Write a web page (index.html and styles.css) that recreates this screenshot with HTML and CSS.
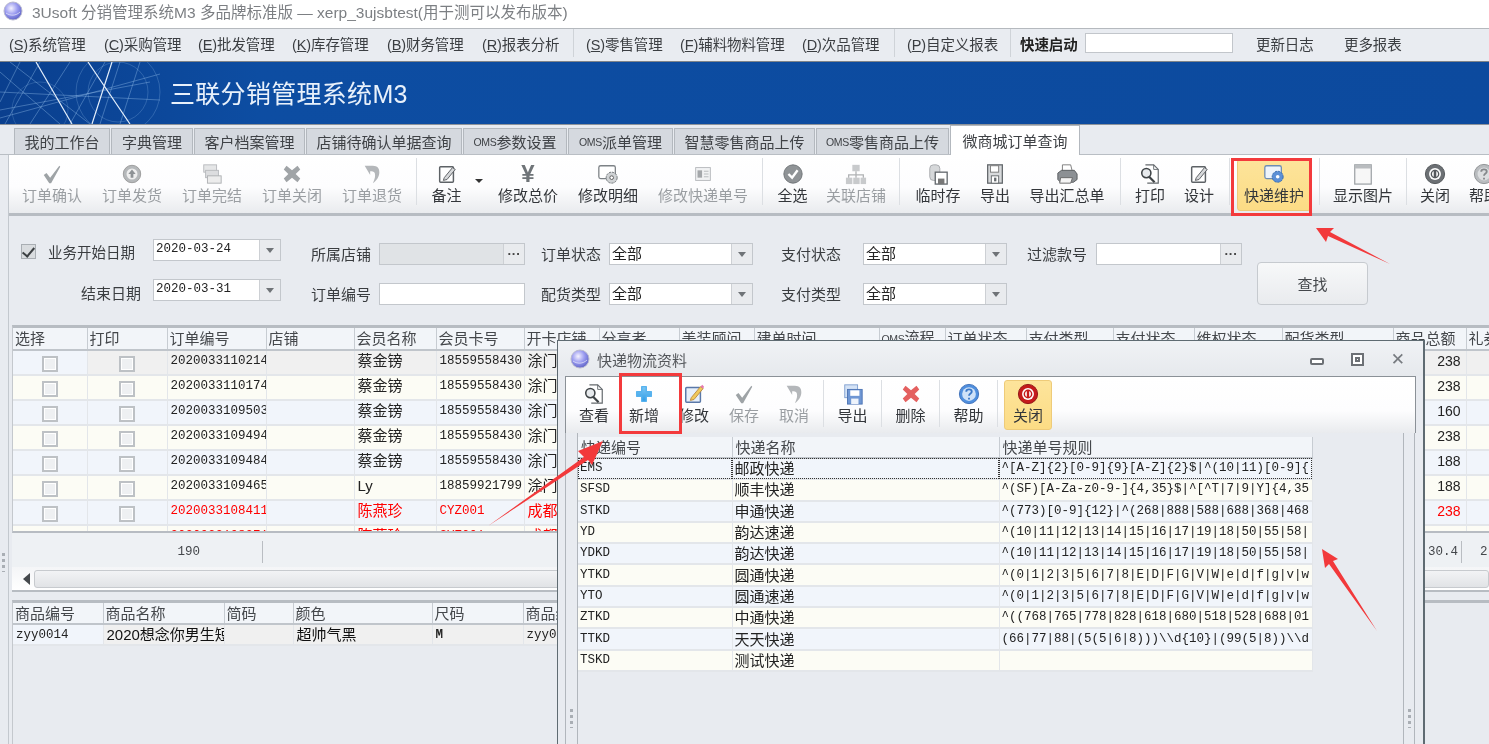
FILE: index.html
```html
<!DOCTYPE html>
<html lang="zh-CN">
<head>
<meta charset="utf-8">
<title>3Usoft 分销管理系统M3</title>
<link rel="stylesheet" href="styles.css">
</head>
<body>
<svg class="defs" width="0" height="0" aria-hidden="true">
  <defs>
    <radialGradient id="orb" cx="40%" cy="35%" r="70%"><stop offset="0" stop-color="#f4f2ff"/><stop offset=".5" stop-color="#9b9cf0"/><stop offset="1" stop-color="#5a5fc4"/></radialGradient>
    <linearGradient id="bluegrad" x1="0" y1="0" x2="0" y2="1"><stop offset="0" stop-color="#7dc8f5"/><stop offset="1" stop-color="#2f9be6"/></linearGradient>
    <symbol id="i-orb" viewBox="0 0 20 20"><circle cx="10" cy="10" r="9" fill="url(#orb)" stroke="#b9b9cf"/><path d="M3 12c4 3 10 3 14-1" fill="none" stroke="#fff" opacity=".6"/></symbol>
    <symbol id="i-check" viewBox="0 0 24 24"><path d="M3 13l3-2 4 5L20 3l1 1-10 18h-2z" fill="#9ea3a6"/></symbol>
    <symbol id="i-up" viewBox="0 0 24 24"><circle cx="12" cy="12" r="9.500" fill="#b5b8ba" stroke="#999"/><circle cx="12" cy="12" r="6" fill="#eee"/><path d="M12 7l4 5h-2.500v4h-3v-4H8z" fill="#8e9295"/></symbol>
    <symbol id="i-stack" viewBox="0 0 24 24"><rect x="3" y="2" width="14" height="8" fill="#e5e6e7" stroke="#b8babd"/><rect x="5" y="8" width="14" height="8" fill="#dcdddf" stroke="#b8babd"/><rect x="7" y="14" width="15" height="8" fill="#ececec" stroke="#adafb2"/></symbol>
    <symbol id="i-x" viewBox="0 0 24 24"><path d="M6 3l6 5 6-5 3 4-5 5 5 5-3 4-6-5-6 5-3-4 5-5-5-5z" fill="#a0a4a7"/></symbol>
    <symbol id="i-undo" viewBox="0 0 24 24"><path d="M4 3h9c5 0 7 3 7 7 0 5-3 9-7 12 2-4 3-8 2-11-1-2-3-2-5-2v4z" fill="#b4b7ba"/></symbol>
    <symbol id="i-edit" viewBox="0 0 24 24"><rect x="4" y="4" width="15" height="17" rx="1" fill="#fff" stroke="#5d6266" stroke-width="1.600"/><path d="M9 16l9-11 3 2-9 11-4 1z" fill="#d6d8da" stroke="#55595d"/></symbol>
    <symbol id="i-edit-c" viewBox="0 0 24 24"><rect x="3" y="5" width="16" height="16" rx="1" fill="#e6effa" stroke="#5a78a8" stroke-width="1.600"/><path d="M9 16l10-12 3 2-10 12-4 1z" fill="#f1c95a" stroke="#b98a40"/><path d="M19 4l3 2 1-2-2-2z" fill="#e779b0"/></symbol>
    <symbol id="i-gear" viewBox="0 0 24 24"><rect x="2" y="3" width="18" height="14" rx="2" fill="#fff" stroke="#7d8286" stroke-width="1.400"/><circle cx="16" cy="16" r="6" fill="#cfd2d4" stroke="#666b6f" stroke-dasharray="2.500 1"/><circle cx="16" cy="16" r="2" fill="#fff" stroke="#555"/></symbol>
    <symbol id="i-gear-b" viewBox="0 0 24 24"><rect x="2" y="3" width="18" height="14" rx="2" fill="#eef4fb" stroke="#6d8db5" stroke-width="1.400"/><circle cx="16" cy="15" r="6" fill="#5c90d6" stroke="#2f66ad" stroke-dasharray="2.500 1"/><circle cx="16" cy="15" r="2" fill="#fff"/></symbol>
    <symbol id="i-card" viewBox="0 0 24 24"><rect x="4" y="5" width="16" height="14" fill="#f1f2f3" stroke="#b5b8bb"/><rect x="6" y="8" width="5" height="8" fill="#a4a7aa"/><path d="M13 9h5M13 12h5M13 15h5" stroke="#b5b8bb"/></symbol>
    <symbol id="i-checkc" viewBox="0 0 24 24"><circle cx="12" cy="12" r="10" fill="#8f9396" stroke="#6f7376"/><path d="M7 12l4 4 6-8" fill="none" stroke="#fff" stroke-width="2.600"/></symbol>
    <symbol id="i-tree" viewBox="0 0 24 24"><rect x="8" y="2" width="8" height="7" fill="#c8cacc"/><rect x="1" y="16" width="7" height="7" fill="#c8cacc"/><rect x="9" y="16" width="7" height="7" fill="#c8cacc"/><rect x="17" y="16" width="6" height="7" fill="#c8cacc"/><path d="M12 9v7M4 16v-3h16v3" fill="none" stroke="#b0b2b4" stroke-width="1.400"/></symbol>
    <symbol id="i-db" viewBox="0 0 24 24"><rect x="3" y="2" width="11" height="17" rx="4" fill="#d6d8da" stroke="#a6a9ac"/><rect x="9" y="10" width="13" height="13" fill="#fff" stroke="#60656a" stroke-width="1.400"/><rect x="12" y="17" width="7" height="6" fill="#777"/></symbol>
    <symbol id="i-save" viewBox="0 0 24 24"><rect x="4" y="2" width="16" height="20" fill="#d8dadc" stroke="#63686c" stroke-width="1.400"/><rect x="7" y="3" width="9" height="7" fill="#fff" stroke="#777"/><rect x="8" y="14" width="8" height="8" fill="#fff" stroke="#63686c"/><rect x="11" y="16" width="2.500" height="4" fill="#63686c"/></symbol>
    <symbol id="i-save-b" viewBox="0 0 24 24"><rect x="3" y="2" width="14" height="14" fill="#d5e3f6" stroke="#7f9fd0"/><rect x="6" y="7" width="16" height="16" fill="#6f97d4" stroke="#4c74b4"/><rect x="9" y="8" width="10" height="6" fill="#fff"/><rect x="10" y="17" width="8" height="6" fill="#eef3fb"/></symbol>
    <symbol id="i-print" viewBox="0 0 24 24"><path d="M7 2h9l2 8H7z" fill="#fff" stroke="#777"/><path d="M2 11l4-3h14l3 4v6l-4 3H5l-3-3z" fill="#8c9094" stroke="#55595c"/><path d="M5 16h13l-2 6H4z" fill="#f4f4f4" stroke="#666"/></symbol>
    <symbol id="i-find" viewBox="0 0 24 24"><path d="M7 2h9l5 5v15H9" fill="#fff" stroke="#64696d" stroke-width="1.300"/><path d="M16 2v5h5" fill="none" stroke="#64696d"/><circle cx="8" cy="11" r="5" fill="#e7eaed" stroke="#3f4447" stroke-width="1.700"/><path d="M11 15l6 6" stroke="#3f4447" stroke-width="2.400"/></symbol>
    <symbol id="i-win" viewBox="0 0 24 24"><rect x="3" y="2" width="18" height="21" fill="#f7f7f7" stroke="#999ea2" stroke-width="1.300"/><rect x="3" y="2" width="18" height="4" fill="#b9bcbf"/></symbol>
    <symbol id="i-power" viewBox="0 0 24 24"><circle cx="12" cy="12" r="10.500" fill="#6c7074" stroke="#4f5357"/><circle cx="12" cy="12" r="6.500" fill="#fff"/><path d="M12 7.500v9" stroke="#55595d" stroke-width="2.800"/><circle cx="12" cy="12" r="4" fill="none" stroke="#55595d" stroke-width="1.500"/></symbol>
    <symbol id="i-help" viewBox="0 0 24 24"><circle cx="12" cy="12" r="10.500" fill="#b9bcbf" stroke="#8c8f92"/><circle cx="12" cy="12" r="7" fill="#dcdee0"/><path d="M9 9.500c0-3.500 6-3.500 6 0 0 2-3 2-3 4.500M12 16v2" fill="none" stroke="#85888b" stroke-width="2"/></symbol>
    <symbol id="i-help-b" viewBox="0 0 24 24"><circle cx="12" cy="12" r="10.500" fill="#4f8fde" stroke="#3c6fb8"/><circle cx="12" cy="12" r="7.500" fill="#cfe2f8"/><path d="M9 9.500c0-3.500 6-3.500 6 0 0 2-3 2-3 4.500M12 16v2" fill="none" stroke="#3a78c8" stroke-width="2"/></symbol>
    <symbol id="i-plus" viewBox="0 0 24 24"><path d="M9.500 4h5v5.500H20v5h-5.500V20h-5v-5.500H4v-5h5.500z" fill="url(#bluegrad)" stroke="#57b2ee" stroke-linejoin="round" stroke-width="1.500"/></symbol>
    <symbol id="i-xred" viewBox="0 0 24 24"><path d="M6 3l6 5 6-5 3 4-5 5 5 5-3 4-6-5-6 5-3-4 5-5-5-5z" fill="#e4605f"/></symbol>
    <symbol id="i-powerred" viewBox="0 0 24 24"><circle cx="12" cy="12" r="10.500" fill="#c51a1c" stroke="#8d1214"/><circle cx="12" cy="12" r="6.500" fill="#fff"/><circle cx="12" cy="12" r="4" fill="none" stroke="#c51a1c" stroke-width="1.600"/><path d="M12 7.500v8" stroke="#c51a1c" stroke-width="2.600"/></symbol>
  </defs>
</svg>

<div class="app">
  <header class="titlebar">
    <svg class="orb"><use href="#i-orb"/></svg>
    <span class="title-text">3Usoft 分销管理系统M3 多品牌标准版 — xerp_3ujsbtest(用于测可以发布版本)</span>
  </header>

  <nav class="menubar">
    <span class="menu w96">(<u>S</u>)系统管理</span>
    <span class="menu w94">(<u>C</u>)采购管理</span>
    <span class="menu w94">(<u>E</u>)批发管理</span>
    <span class="menu w95">(<u>K</u>)库存管理</span>
    <span class="menu w95">(<u>B</u>)财务管理</span>
    <span class="menu w91">(<u>R</u>)报表分析</span>
    <i class="msep"></i>
    <span class="menu w94">(<u>S</u>)零售管理</span>
    <span class="menu w122">(<u>F</u>)辅料物料管理</span>
    <span class="menu w93">(<u>D</u>)次品管理</span>
    <i class="msep"></i>
    <span class="menu w103">(<u>P</u>)自定义报表</span>
    <i class="msep"></i>
    <span class="menu quick">快速启动</span>
    <span class="quick-input"></span>
    <span class="menu plain">更新日志</span>
    <span class="menu plain">更多报表</span>
  </nav>

  <div class="banner">
    <svg class="banner-art" viewBox="0 0 165 62" width="165" height="62">
      <g fill="none" stroke="#9cc4ee" stroke-opacity=".55" stroke-width=".7">
        <path d="M0 10L60 62M10 0L90 62M40 0L5 62M105 0L70 62M120 0L100 62M150 20L0 48M0 30L160 38M20 0L0 40M70 0L30 62M140 0L120 62M0 56L160 12"/>
        <circle cx="118" cy="30" r="42" stroke-opacity=".35"/><circle cx="118" cy="30" r="30" stroke-opacity=".35"/><circle cx="40" cy="48" r="28" stroke-opacity=".3"/>
      </g>
      <path d="M36 0L72 62M88 0L130 62M112 0L92 62" stroke="#e3eefb" stroke-width="1.200" fill="none"/>
    </svg>
    <h1 class="banner-title">三联分销管理系统M3</h1>
  </div>

  <div class="tabs">
    <span class="tab t97">我的工作台</span>
    <span class="tab t83">字典管理</span>
    <span class="tab t112">客户档案管理</span>
    <span class="tab t157">店铺待确认单据查询</span>
    <span class="tab t105"><small>OMS</small>参数设置</span>
    <span class="tab t106"><small>OMS</small>派单管理</span>
    <span class="tab t142">智慧零售商品上传</span>
    <span class="tab t134"><small>OMS</small>零售商品上传</span>
    <span class="tab active">微商城订单查询</span>
  </div>

  <div class="workspace">
    <div class="strip"><span class="grip"></span></div>
    <div class="content">
      <div class="toolbar">
        <div class="tb w80 off"><svg class="ic"><use href="#i-check"/></svg><span>订单确认</span></div>
        <div class="tb w80 off"><svg class="ic"><use href="#i-up"/></svg><span>订单发货</span></div>
        <div class="tb w80 off"><svg class="ic"><use href="#i-stack"/></svg><span>订单完结</span></div>
        <div class="tb w80 off"><svg class="ic"><use href="#i-x"/></svg><span>订单关闭</span></div>
        <div class="tb w80 off"><svg class="ic"><use href="#i-undo"/></svg><span>订单退货</span></div>
        <i class="sep"></i>
        <div class="tb w51"><svg class="ic"><use href="#i-edit"/></svg><span>备注</span></div>
        <div class="caret-box"><i class="caret"></i></div>
        <div class="tb w80"><span class="yen">¥</span><span>修改总价</span></div>
        <div class="tb w80"><svg class="ic"><use href="#i-gear"/></svg><span>修改明细</span></div>
        <div class="tb w110 off"><svg class="ic"><use href="#i-card"/></svg><span>修改快递单号</span></div>
        <i class="sep"></i>
        <div class="tb w51"><svg class="ic"><use href="#i-checkc"/></svg><span>全选</span></div>
        <div class="tb w76 off"><svg class="ic"><use href="#i-tree"/></svg><span>关联店铺</span></div>
        <i class="sep wide"></i>
        <div class="tb w66"><svg class="ic"><use href="#i-db"/></svg><span>临时存</span></div>
        <div class="tb w48"><svg class="ic"><use href="#i-save"/></svg><span>导出</span></div>
        <div class="tb w96"><svg class="ic"><use href="#i-print"/></svg><span>导出汇总单</span></div>
        <i class="sep wide"></i>
        <div class="tb w48"><svg class="ic"><use href="#i-find"/></svg><span>打印</span></div>
        <div class="tb w50"><svg class="ic"><use href="#i-edit"/></svg><span>设计</span></div>
        <i class="sep wide"></i>
        <div class="tb w74 hot"><svg class="ic"><use href="#i-gear-b"/></svg><span>快递维护</span></div>
        <i class="sep after-hot"></i>
        <div class="tb w78"><svg class="ic"><use href="#i-win"/></svg><span>显示图片</span></div>
        <i class="sep"></i>
        <div class="tb w48"><svg class="ic"><use href="#i-power"/></svg><span>关闭</span></div>
        <div class="tb w50"><svg class="ic"><use href="#i-help"/></svg><span>帮助</span></div>
      </div>

      <form class="filter">
        <label class="f-first"><span class="check on"></span>业务开始日期</label>
        <div class="combo date"><span class="val mono">2020-03-24</span><i class="drop"></i></div>
        <label class="f-l l30 low">所属店铺</label>
        <div class="combo low-box dis"><span class="val"></span><i class="dots">···</i></div>
        <label class="f-l l16 low">订单状态</label>
        <div class="combo low-box"><span class="val">全部</span><i class="drop"></i></div>
        <label class="f-l l28 low">支付状态</label>
        <div class="combo low-box"><span class="val">全部</span><i class="drop"></i></div>
        <label class="f-l l20 low">过滤款号</label>
        <div class="combo low-box"><span class="val"></span><i class="dots">···</i></div>
        <button class="find" type="button">查找</button>

        <label class="f-end">结束日期</label>
        <div class="combo date"><span class="val mono">2020-03-31</span><i class="drop"></i></div>
        <label class="f-l l30 low">订单编号</label>
        <div class="combo low-box"><span class="val"></span></div>
        <label class="f-l l16 low">配货类型</label>
        <div class="combo low-box"><span class="val">全部</span><i class="drop"></i></div>
        <label class="f-l l28 low">支付类型</label>
        <div class="combo low-box"><span class="val">全部</span><i class="drop"></i></div>
      </form>

      <div class="grid-wrap main-grid">
        <table class="grid orders">
          <colgroup><col class="c74"><col class="c80"><col class="c99"><col class="c88"><col class="c82"><col class="c88"><col class="c75"><col class="c80"><col class="c75"><col class="c125"><col class="c66"><col class="c81"><col class="c87"><col class="c81"><col class="c88"><col class="c111"><col class="c73"><col class="c60"></colgroup>
          <thead><tr><th>选择</th><th>打印</th><th>订单编号</th><th>店铺</th><th>会员名称</th><th>会员卡号</th><th>开卡店铺</th><th>分享者</th><th>美装顾问</th><th>建单时间</th><th><small>OMS</small>流程</th><th>订单状态</th><th>支付类型</th><th>支付状态</th><th>维权状态</th><th>配货类型</th><th>商品总额</th><th>礼券</th></tr></thead>
          <tbody>
            <tr class="odd sel"><td class="chk"><b></b></td><td class="chk"><b></b></td><td class="m">20200331102144</td><td></td><td>蔡金镑</td><td class="m">18559558430</td><td>涂门店</td><td></td><td></td><td></td><td></td><td></td><td></td><td></td><td></td><td></td><td class="num">238</td><td></td></tr>
            <tr class="even"><td class="chk"><b></b></td><td class="chk"><b></b></td><td class="m">20200331101744</td><td></td><td>蔡金镑</td><td class="m">18559558430</td><td>涂门店</td><td></td><td></td><td></td><td></td><td></td><td></td><td></td><td></td><td></td><td class="num">238</td><td></td></tr>
            <tr class="odd"><td class="chk"><b></b></td><td class="chk"><b></b></td><td class="m">20200331095033</td><td></td><td>蔡金镑</td><td class="m">18559558430</td><td>涂门店</td><td></td><td></td><td></td><td></td><td></td><td></td><td></td><td></td><td></td><td class="num">160</td><td></td></tr>
            <tr class="even"><td class="chk"><b></b></td><td class="chk"><b></b></td><td class="m">20200331094944</td><td></td><td>蔡金镑</td><td class="m">18559558430</td><td>涂门店</td><td></td><td></td><td></td><td></td><td></td><td></td><td></td><td></td><td></td><td class="num">238</td><td></td></tr>
            <tr class="odd"><td class="chk"><b></b></td><td class="chk"><b></b></td><td class="m">20200331094844</td><td></td><td>蔡金镑</td><td class="m">18559558430</td><td>涂门店</td><td></td><td></td><td></td><td></td><td></td><td></td><td></td><td></td><td></td><td class="num">188</td><td></td></tr>
            <tr class="even"><td class="chk"><b></b></td><td class="chk"><b></b></td><td class="m">20200331094655</td><td></td><td>Ly</td><td class="m">18859921799</td><td>涂门店</td><td></td><td></td><td></td><td></td><td></td><td></td><td></td><td></td><td></td><td class="num">188</td><td></td></tr>
            <tr class="odd red"><td class="chk"><b></b></td><td class="chk"><b></b></td><td class="m">20200331084111</td><td></td><td>陈燕珍</td><td class="m">CYZ001</td><td>成都店</td><td></td><td></td><td></td><td></td><td></td><td></td><td></td><td></td><td></td><td class="num">238</td><td></td></tr>
            <tr class="even red"><td class="chk"><b></b></td><td class="chk"><b></b></td><td class="m">20200331083711</td><td></td><td>陈燕珍</td><td class="m">CYZ001</td><td>成都店</td><td></td><td></td><td></td><td></td><td></td><td></td><td></td><td></td><td></td><td class="num">238</td><td></td></tr>
          </tbody>
        </table>
      </div>

      <div class="summary">
        <span class="sum-a">190</span>
        <span class="sum-b m">30.4</span>
        <span class="sum-c m">2</span>
      </div>
      <div class="hscroll"><i class="arrow-left"></i><span class="thumb"></span></div>

      <div class="grid-wrap detail-grid">
        <table class="grid detail">
          <colgroup><col class="c90"><col class="c121"><col class="c69"><col class="c139"><col class="c91"><col class="c120"></colgroup>
          <thead><tr><th>商品编号</th><th>商品名称</th><th>简码</th><th>颜色</th><th>尺码</th><th>商品编号</th></tr></thead>
          <tbody><tr class="sel"><td class="m first">zyy0014</td><td class="dark">2020想念你男生短袖</td><td></td><td class="dark">超帅气黑</td><td class="m bold">M</td><td class="m">zyy0014</td></tr></tbody>
        </table>
      </div>
    </div>
  </div>

  <section class="window">
    <div class="win-title">
      <svg class="orb"><use href="#i-orb"/></svg>
      <span class="win-name">快递物流资料</span>
      <div class="win-ctrls">
        <i class="ctl-min"></i><i class="ctl-max"></i><span class="ctl-close">✕</span>
      </div>
    </div>
    <div class="win-toolbar">
      <div class="wtb"><svg class="ic"><use href="#i-find"/></svg><span>查看</span></div>
      <div class="wtb"><svg class="ic"><use href="#i-plus"/></svg><span>新增</span></div>
      <div class="wtb"><svg class="ic"><use href="#i-edit-c"/></svg><span>修改</span></div>
      <div class="wtb off"><svg class="ic"><use href="#i-check"/></svg><span>保存</span></div>
      <div class="wtb off"><svg class="ic"><use href="#i-undo"/></svg><span>取消</span></div>
      <i class="sep"></i>
      <div class="wtb narrow"><svg class="ic"><use href="#i-save-b"/></svg><span>导出</span></div>
      <i class="sep"></i>
      <div class="wtb narrow"><svg class="ic"><use href="#i-xred"/></svg><span>删除</span></div>
      <i class="sep"></i>
      <div class="wtb narrow"><svg class="ic"><use href="#i-help-b"/></svg><span>帮助</span></div>
      <i class="sep"></i>
      <div class="wtb hot close"><svg class="ic"><use href="#i-powerred"/></svg><span>关闭</span></div>
    </div>
    <div class="win-body">
      <div class="win-strip left"><span class="grip"></span></div>
      <div class="win-grid">
        <table class="grid express">
          <colgroup><col class="c154"><col class="c267"><col class="c313"></colgroup>
          <thead><tr><th>快递编号</th><th>快递名称</th><th>快递单号规则</th></tr></thead>
          <tbody>
            <tr class="odd focus"><td class="m">EMS</td><td>邮政快递</td><td class="m">^[A-Z]{2}[0-9]{9}[A-Z]{2}$|^(10|11)[0-9]{</td></tr>
            <tr class="even"><td class="m">SFSD</td><td>顺丰快递</td><td class="m">^(SF)[A-Za-z0-9-]{4,35}$|^[^T|7|9|Y]{4,35</td></tr>
            <tr class="odd"><td class="m">STKD</td><td>申通快递</td><td class="m">^(773)[0-9]{12}|^(268|888|588|688|368|468</td></tr>
            <tr class="even"><td class="m">YD</td><td>韵达速递</td><td class="m">^(10|11|12|13|14|15|16|17|19|18|50|55|58|</td></tr>
            <tr class="odd"><td class="m">YDKD</td><td>韵达快递</td><td class="m">^(10|11|12|13|14|15|16|17|19|18|50|55|58|</td></tr>
            <tr class="even"><td class="m">YTKD</td><td>圆通快递</td><td class="m">^(0|1|2|3|5|6|7|8|E|D|F|G|V|W|e|d|f|g|v|w</td></tr>
            <tr class="odd"><td class="m">YTO</td><td>圆通速递</td><td class="m">^(0|1|2|3|5|6|7|8|E|D|F|G|V|W|e|d|f|g|v|w</td></tr>
            <tr class="even"><td class="m">ZTKD</td><td>中通快递</td><td class="m">^((768|765|778|828|618|680|518|528|688|01</td></tr>
            <tr class="odd"><td class="m">TTKD</td><td>天天快递</td><td class="m">(66|77|88|(5(5|6|8)))\\d{10}|(99(5|8))\\d</td></tr>
            <tr class="even"><td class="m">TSKD</td><td>测试快递</td><td></td></tr>
          </tbody>
        </table>
      </div>
      <div class="win-strip right"><span class="grip"></span></div>
    </div>
  </section>

  <svg class="marks" viewBox="0 0 1489 744" width="1489" height="744" aria-hidden="true">
    <rect class="mark-box" x="1232.500" y="159.500" width="78" height="55"/>
    <rect class="mark-box" x="620.500" y="374.500" width="60" height="58"/>
    <polygon class="mark-arrow" points="1390,264 1330,232 1334,228 1316,228 1326,242 1328,236"/>
    <polygon class="mark-arrow" points="488,526 584,457 578,451 603,441 592,465 588,460"/>
    <polygon class="mark-arrow" points="1377,631 1333,561 1338,559 1322,549 1325,568 1329,564"/>
  </svg>
</div>
</body>
</html>
```

FILE: styles.css
```css
* { box-sizing: border-box; }
html, body { margin: 0; height: 100%; }
body { background: #e8ebf0; overflow: hidden; }
.defs { position: absolute; }
.app {
  position: relative; width: 1489px; height: 744px; overflow: hidden;
  font-family: "Liberation Sans", "Noto Sans CJK SC", sans-serif;
  font-size: 15px; color: #3a3d40; background: #e8ebf0;
  filter: blur(.35px);
}
small { font-family: "Liberation Sans", sans-serif; font-size: 10.500px; letter-spacing: -.3px; }

/* title */
.titlebar { height: 29px; background: #fff; border-bottom: 1px solid #b5b9be; display: flex; align-items: center; padding: 0 0 6px 3px; gap: 9px; }
.orb { width: 20px; height: 20px; flex: none; }
.title-text { font-size: 15.500px; color: #7c7f83; white-space: nowrap; }

/* menu */
.menubar { height: 33px; padding: 0 0 4px 9px; background: #e9ecf1; border-bottom: 1px solid #7f8489; display: flex; align-items: center; white-space: nowrap; }
.menu { font-size: 14.500px; color: #3b3e42; flex: none; letter-spacing: -.1px; }
.w96 { width: 95px; } .w94 { width: 94px; } .w95 { width: 95px; } .w91 { width: 91px; }
.w122 { width: 122px; } .w93 { width: 92px; } .w103 { width: 103px; }
.msep { width: 1px; height: 28px; background: #cfd3d8; margin-right: 12px; flex: none; }
.quick { font-weight: 700; color: #222; margin-left: -3px; width: 65px; }
.quick-input { width: 148px; height: 20px; background: #fff; border: 1px solid #c2c6cb; margin-right: 23px; flex: none; }
.plain { margin-right: 29px; width: 59px; }

/* banner */
.banner { height: 63px; background: #0c4a9e; border-bottom: 1px solid #8d939a; display: flex; align-items: center; position: relative; background-image: linear-gradient(90deg, #0a3f8e 0, #0d4da2 260px, #0c4a9e 100%); }
.banner-art { flex: none; margin-right: 5px; }
.banner-title { margin: 0; font-size: 25px; font-weight: 400; color: #e9f1fb; letter-spacing: .3px; padding-bottom: 2px; white-space: nowrap; }

/* tabs */
.tabs { height: 30px; padding-left: 14px; display: flex; align-items: flex-end; background: #e8ebf0; border-bottom: 1px solid #b9bec4; }
.tab { height: 26px; background: #d5d9df; border: 1px solid #b3b8be; border-bottom: 0; margin-right: 1px; flex: none; display: flex; align-items: center; justify-content: center; font-size: 15px; color: #3f4246; white-space: nowrap; }
.t97 { width: 96px; } .t83 { width: 82px; } .t112 { width: 111px; } .t157 { width: 156px; }
.t105 { width: 104px; } .t106 { width: 105px; } .t142 { width: 141px; } .t134 { width: 133px; }
.tab.active { width: 130px; height: 30px; background: #fff; margin-bottom: -1px; }

/* workspace */
.workspace { display: flex; height: 589px; }
.strip { width: 9px; flex: none; border-right: 1px solid #c3c8ce; padding: 398px 0 0 2px; }
.grip { display: block; width: 3px; height: 19px; background: repeating-linear-gradient(#a9aeb4 0 3px, transparent 3px 6px); }
.content { flex: 1; min-width: 0; }

/* toolbar */
.toolbar { height: 58px; padding-left: 3px; display: flex; align-items: stretch; background: linear-gradient(#fff 0, #fdfdfe 55%, #e9ebee 100%); white-space: nowrap; }
.tb { flex: none; display: flex; flex-direction: column; align-items: center; padding-top: 8px; font-size: 15px; color: #33363a; }
.tb .ic { width: 22px; height: 22px; flex: none; }
.tb span:last-child { line-height: 22px; }
.off { color: #9a9ea2; }
.yen { font: 700 24px/22px "Liberation Sans", sans-serif; color: #6f7478; height: 22px; }
.w80 { width: 80px; } .w51 { width: 51px; } .w110 { width: 110px; } .w76 { width: 76px; }
.w66 { width: 66px; } .w48 { width: 48px; } .tb.w96 { width: 96px; } .w50 { width: 50px; } .tb.w74 { width: 74px; } .w78 { width: 78px; }
.caret-box { width: 16px; flex: none; padding: 24px 0 0 1px; }
.caret { display: block; width: 0; height: 0; border: 4px solid transparent; border-top: 4px solid #333; border-bottom: 0; margin-left: 2px; }
.sep { width: 1px; flex: none; margin: 3px 4px 8px; background: #dcdfe3; }
.sep.wide { margin-left: 5px; margin-right: 5px; }
.hot { background: linear-gradient(#fde49b, #fcdc85); border: 1px solid #eecb79; border-radius: 3px; margin: 4px 0 2px 2px; padding-top: 3px; }
.sep.after-hot { margin-left: 8px; }

/* filter */
.filter { height: 112px; border-top: 3px solid #b7bcc2; padding: 23px 0 0 12px; display: grid; grid-template-columns: 132px 128px 98px 146px 84px 144px 110px 144px 89px 146px 126px; grid-template-rows: 28px 28px; row-gap: 12px; align-items: start; font-size: 15px; color: #3a3d40; }
.f-first { display: flex; align-items: center; gap: 12px; height: 22px; margin-top: 1px; font-size: 14.500px; white-space: nowrap; }
.f-end { text-align: right; padding-right: 12px; line-height: 22px; margin-top: 4px; }
.f-l { line-height: 22px; white-space: nowrap; }
.l30 { padding-left: 30px; } .l16 { padding-left: 16px; } .l28 { padding-left: 28px; } .l20 { padding-left: 20px; }
.low { margin-top: 5px; }
.check { width: 15px; height: 15px; background: #d9dcdf; border: 1px solid #a9aeb3; position: relative; flex: none; }
.check.on::after { content: ""; position: absolute; left: 3px; top: 0; width: 5px; height: 10px; border: solid #3c4043; border-width: 0 2px 2px 0; transform: rotate(40deg); }
.combo { height: 22px; background: #fff; border: 1px solid #c3c7cc; display: flex; font-size: 15px; }
.low-box { margin-top: 4px; }
.combo.dis { background: #e0e3e6; }
.val { flex: 1; padding-left: 2px; line-height: 19px; white-space: nowrap; overflow: hidden; color: #222; }
.val.mono { font: 12.500px/18px "Liberation Mono", monospace; }
.drop, .dots { width: 21px; flex: none; background: #e9ebee; border-left: 1px solid #cdd0d4; position: relative; }
.drop::after { content: ""; position: absolute; left: 6px; top: 8px; border: 4px solid transparent; border-top: 5px solid #6f7377; border-bottom: 0; }
.dots { font: 700 13px/20px "Liberation Sans", sans-serif; color: #444; text-align: center; }
.find { grid-column: 11; grid-row: 1 / span 2; width: 111px; height: 43px; margin: 23px 0 0 15px; background: linear-gradient(#f7f8f9, #e9ebee); border: 1px solid #c6cacf; border-radius: 4px; font: 15px "Liberation Sans", "Noto Sans CJK SC", sans-serif; color: #44474b; }

/* grids */
.grid-wrap { margin-left: 3px; background: #e8ebf0; overflow: hidden; }
.main-grid { height: 208px; border-top: 3px solid #b7bcc2; border-left: 1px solid #c4c8cd; border-bottom: 2px solid #b7bcc2; }
.grid { border-collapse: collapse; table-layout: fixed; }
.orders { width: 1513px; }
.detail { width: 630px; }
.express { width: 734px; }
.grid th { height: 20px; padding: 0 0 0 2px; background: #f2f5f9; border-right: 1px solid #c7ccd2; border-bottom: 2px solid #c0c5cb; font-weight: 400; font-size: 15px; color: #44474b; text-align: left; white-space: nowrap; overflow: hidden; line-height: 19px; }
.grid td { height: 25px; padding: 0 0 3px 3px; border-right: 1px solid #e3e6ea; border-bottom: 2px solid #e3e6ea; white-space: nowrap; overflow: hidden; font-size: 15px; line-height: 18px; color: #222; }
.odd td { background: #f1f5fb; }
.even td { background: #fcfcf5; }
.sel td { background: #f0f0f0; }
.sel td:first-child { background: #f1f5fb; }
.red td { color: #f00; }
.m { font-family: "Liberation Mono", monospace; font-size: 12.500px !important; }
.grid td.num { font-family: "Liberation Sans", sans-serif; font-size: 14px; text-align: right; padding-right: 5px; }
.chk { text-align: center; }
.grid td.chk { padding: 0; }
.chk b { display: inline-block; width: 16px; height: 16px; vertical-align: middle; background: #eef0f2; border: 2px solid #bdc1c5; box-shadow: inset 0 0 0 1px #fff; }
.c60 { width: 60px; } .c66 { width: 66px; } .c69 { width: 69px; } .c73 { width: 73px; } .c74 { width: 74px; } .c75 { width: 75px; }
.c80 { width: 80px; } .c81 { width: 81px; } .c82 { width: 82px; } .c87 { width: 87px; } .c88 { width: 88px; } .c90 { width: 90px; }
.c91 { width: 91px; } .c99 { width: 99px; } .c111 { width: 111px; } .c120 { width: 120px; } .c121 { width: 121px; } .c125 { width: 125px; }
.c139 { width: 139px; } .c154 { width: 154px; } .c267 { width: 267px; } .c313 { width: 313px; }

/* summary */
.summary { height: 34px; margin-left: 3px; padding-top: 3px; background: #eef1f4; display: flex; align-items: center; font-size: 14px; color: #44474b; }
.sum-a { width: 251px; padding-right: 62px; text-align: right; border-right: 1px solid #b9bdc2; height: 22px; line-height: 22px; flex: none; font-family: "Liberation Mono", monospace; font-size: 12.500px; }
.sum-b { margin-left: 1165px; width: 34px; border-right: 1px solid #b9bdc2; height: 22px; line-height: 22px; flex: none; }
.sum-c { padding-left: 18px; flex: none; }
.hscroll { height: 25px; margin-left: 3px; padding: 4px 0 3px 22px; background: linear-gradient(#f4f5f7, #fff); border-bottom: 2px solid #b7bcc2; display: flex; align-items: center; position: relative; }
.arrow-left { position: absolute; left: 11px; top: 6px; border: 6px solid transparent; border-right: 7px solid #44484c; border-left: 0; }
.thumb { flex: 1; height: 18px; background: linear-gradient(#f2f3f5, #e1e3e6); border: 1px solid #c7cace; border-radius: 3px; }
.detail-grid { margin-top: 8px; height: 150px; border-top: 3px solid #b7bcc2; border-left: 1px solid #c4c8cd; }
.detail th { height: 21px; }
.detail td { height: 21px; padding-bottom: 0; }
.detail .first { background: #f1f5fb; }
.detail .dark { color: #111; }
.detail .bold { font-weight: 700; }

/* floating window */
.window { position: absolute; left: 557px; top: 340px; width: 867px; height: 420px; background: #e8ebf0; border: 1px solid #5f6b72; border-bottom: 0; box-shadow: 1px 0 0 #5f6b72; }
.win-title { height: 35px; display: flex; align-items: center; padding: 1px 0 0 12px; gap: 7px; background: linear-gradient(#f0f2f5, #e6e9ed); }
.win-name { font-size: 15px; color: #54575b; }
.win-ctrls { margin-left: auto; display: flex; align-items: center; padding-right: 18px; gap: 27px; }
.ctl-min { width: 14px; height: 7px; margin-top: 5px; border: 2px solid #6c7075; border-radius: 2px; background: #fff; }
.ctl-max { width: 13px; height: 13px; border: 2px solid #6c7075; background: #fff; box-shadow: inset 0 0 0 2px #fff, inset 0 0 0 4px #6c7075; }
.ctl-close { font: 700 17px/17px "DejaVu Sans", sans-serif; color: #777b80; }
.win-toolbar { height: 57px; margin: 0 7px; background: linear-gradient(#fff, #fdfdfe 60%, #e9ebee); border: 1px solid #8b9197; border-bottom: 0; padding-left: 3px; display: flex; }
.wtb { width: 50px; flex: none; display: flex; flex-direction: column; align-items: center; padding-top: 6px; font-size: 15px; color: #33363a; }
.wtb.off { color: #9a9ea2; }
.wtb .ic { width: 22px; height: 22px; flex: none; }
.wtb span { line-height: 22px; }
.wtb.narrow { width: 49px; }
.win-toolbar .sep { margin: 3px 4px 6px; }
.wtb.hot.close { width: 48px; margin: 3px 0 3px 2px; padding-top: 2px; }
.win-body { display: flex; margin-left: 7px; height: 320px; }
.win-strip { width: 13px; flex: none; border-left: 1px solid #b1b6bc; border-right: 1px solid #b1b6bc; padding: 276px 0 0 4px; }
.win-strip.right { width: 12px; }
.win-grid { width: 825px; flex: none; padding-top: 4px; }
.express th { height: 21px; padding-left: 3px; }
.express td { height: 21.300px; padding: 0 0 0 2px; border-bottom-width: 2px; line-height: 17px; }
.focus td { outline: 1px dotted #333; outline-offset: -1px; }

/* annotations */
.marks { position: absolute; left: 0; top: 0; pointer-events: none; }
.mark-box { fill: none; stroke: #f33a3c; stroke-width: 3; }
.mark-arrow { fill: #f2393b; }
```
